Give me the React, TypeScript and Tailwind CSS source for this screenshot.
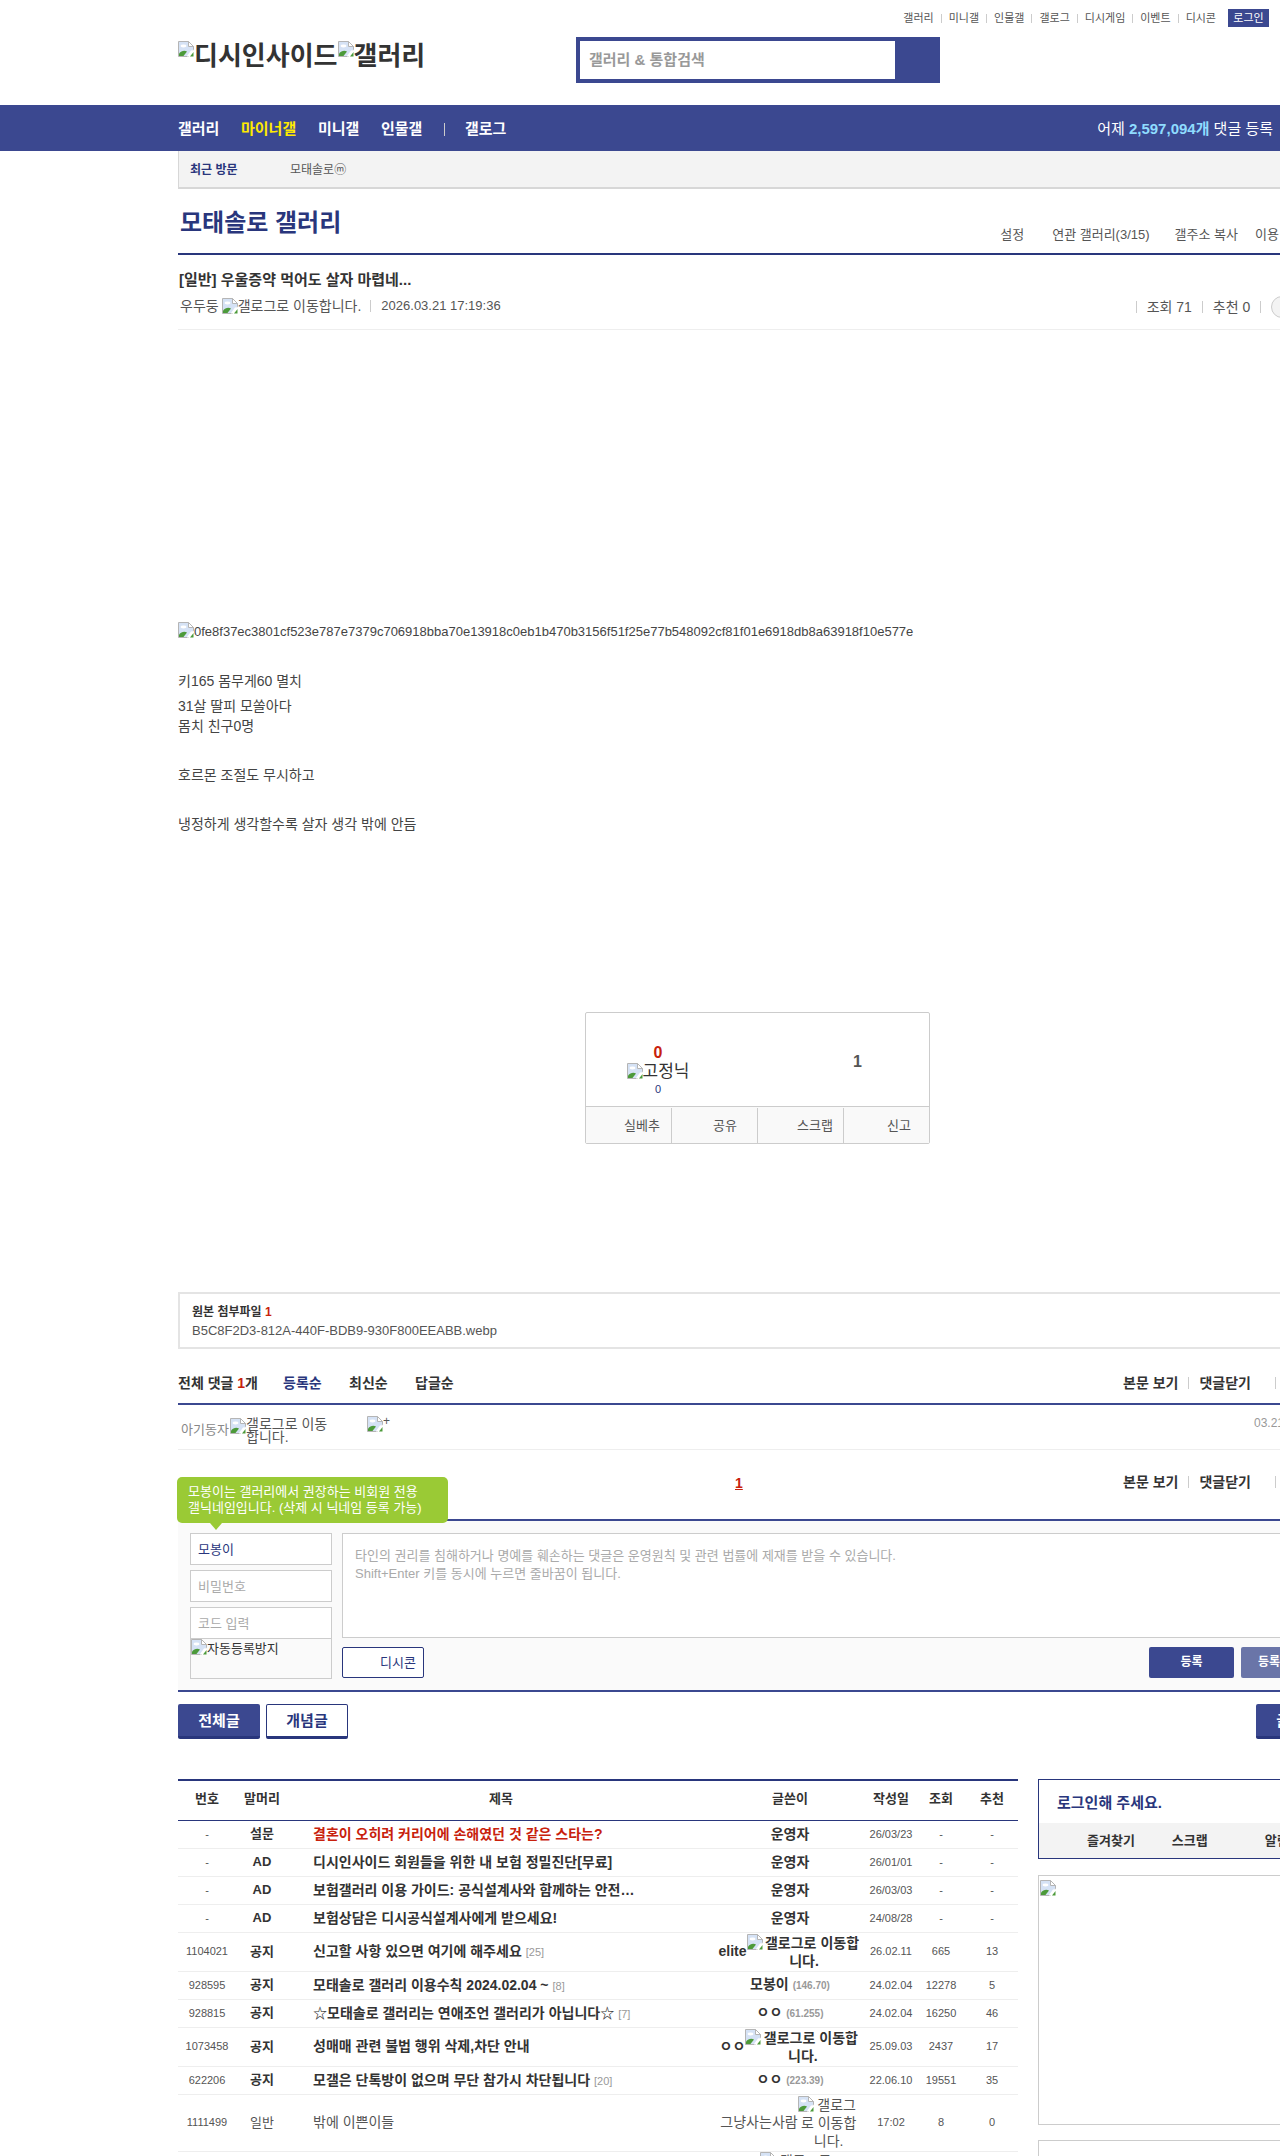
import { FC, ReactNode } from "react";

const BrokenImg: FC<{ className?: string }> = ({ className }) => (
  <svg width="16" height="16" viewBox="0 0 16 16" className={`inline-block shrink-0 align-[-2px] ${className || ""}`}>
    <path d="M0.5 0.5H10.5L15.5 5.5V8.5L10.5 15.5H0.5Z" fill="#d5e2f5" stroke="#b5b5b5" />
    <path d="M10.5 0.5V5.5H15.5Z" fill="#fff" stroke="#b5b5b5" />
    <ellipse cx="5.5" cy="5" rx="3" ry="1.4" fill="#fff" />
    <path d="M1 15V12.5C3.5 9.5 6.5 9 9 10.5L5.5 15Z" fill="#4c9a3a" />
    <path d="M9 15L13 9.5L15.5 9V15.5H9Z" fill="#fff" />
    <path d="M12 15.5L15.5 11V15.5Z" fill="#4c9a3a" />
  </svg>
);

// a broken img with alt text: the icon floats, the alt wraps beside it
const Alt: FC<{ text: string; className?: string }> = ({ text, className }) => (
  <span className={`inline-block align-middle text-center ${className || ""}`}>
    <BrokenImg className="float-left" />
    {text}
  </span>
);

const Sep = ({ className = "h-[11px]" }: { className?: string }) => (
  <span className={`inline-block w-px bg-[#ccc] ${className}`} />
);

const topLinks = ["갤러리", "미니갤", "인물갤", "갤로그", "디시게임", "이벤트", "디시콘"];

type Row = {
  no: string;
  head: string;
  title: string;
  count?: string;
  writer: ReactNode;
  date: string;
  views: string;
  rec: string;
  h: string;
  red?: boolean;
  plain?: boolean;
};

const Gallog = ({ nick }: { nick: string }) => (
  <>
    {nick}
    <Alt text="갤로그로 이동합니다." className="w-[115px] leading-[18px]" />
  </>
);

const Rate = ({ nick, n }: { nick: string; n: string }) => (
  <>
    {nick} <span className="text-[10px] text-[#999]">({n})</span>
  </>
);

const rows: Row[] = [
  { no: "-", head: "설문", title: "결혼이 오히려 커리어에 손해였던 것 같은 스타는?", writer: "운영자", date: "26/03/23", views: "-", rec: "-", h: "h-[28px]", red: true },
  { no: "-", head: "AD", title: "디시인사이드 회원들을 위한 내 보험 정밀진단[무료]", writer: "운영자", date: "26/01/01", views: "-", rec: "-", h: "h-[28px]" },
  { no: "-", head: "AD", title: "보험갤러리 이용 가이드: 공식설계사와 함께하는 안전…", writer: "운영자", date: "26/03/03", views: "-", rec: "-", h: "h-[28px]" },
  { no: "-", head: "AD", title: "보험상담은 디시공식설계사에게 받으세요!", writer: "운영자", date: "24/08/28", views: "-", rec: "-", h: "h-[28px]" },
  { no: "1104021", head: "공지", title: "신고할 사항 있으면 여기에 해주세요", count: "[25]", writer: <Gallog nick="elite" />, date: "26.02.11", views: "665", rec: "13", h: "h-[39px]" },
  { no: "928595", head: "공지", title: "모태솔로 갤러리 이용수칙 2024.02.04 ~", count: "[8]", writer: <Rate nick="모봉이" n="146.70" />, date: "24.02.04", views: "12278", rec: "5", h: "h-[28px]" },
  { no: "928815", head: "공지", title: "☆모태솔로 갤러리는 연애조언 갤러리가 아닙니다☆", count: "[7]", writer: <Rate nick="ㅇㅇ" n="61.255" />, date: "24.02.04", views: "16250", rec: "46", h: "h-[28px]" },
  { no: "1073458", head: "공지", title: "성매매 관련 불법 행위 삭제,차단 안내", writer: <Gallog nick="ㅇㅇ" />, date: "25.09.03", views: "2437", rec: "17", h: "h-[39px]" },
  { no: "622206", head: "공지", title: "모갤은 단톡방이 없으며 무단 참가시 차단됩니다", count: "[20]", writer: <Rate nick="ㅇㅇ" n="223.39" />, date: "22.06.10", views: "19551", rec: "35", h: "h-[28px]" },
  { no: "1111499", head: "일반", title: "밖에 이쁜이들", writer: <>그냥사는사람<Alt text=" 갤로그로 이동합니다." className="w-[62px] leading-[18px]" /></>, date: "17:02", views: "8", rec: "0", h: "h-[57px]", plain: true },
];

const ViewLinks = () => (
  <div className="flex items-center text-[14px] leading-[18px] font-bold text-[#333]">
    <span>본문 보기</span>
    <Sep className="mx-[10px] h-[12px]" />
    <span>댓글닫기</span>
    <Sep className="ml-[24px] h-[12px]" />
    <span className="ml-[8px] w-[54px] whitespace-nowrap">새로고침</span>
  </div>
);

export default function App() {
  return (
    <div className="w-[1280px] h-[2156px] overflow-hidden bg-white text-[#333] [font-family:'Liberation_Sans','Noto_Sans_CJK_KR',sans-serif]">
      <header className="w-[1160px] ml-[178px] h-[105px]">
        <div className="flex justify-end items-center pt-[9px] pr-[69px] h-[27px] text-[11px] text-[#555]">
          {topLinks.map((l, i) => (
            <span key={l} className="flex items-center">
              {i > 0 && <Sep className="mx-[7px] h-[9px]" />}
              {l}
            </span>
          ))}
          <span className="ml-[12px] w-[41px] h-[18px] leading-[18px] text-center bg-[#3b4890] text-white">로그인</span>
        </div>
        <div className="flex items-start mt-[10px]">
          <div className="w-[398px] flex items-center text-[26px] leading-[30px] font-bold text-[#333] pt-[4px]">
            <BrokenImg className="self-start" />
            디시인사이드
            <BrokenImg className="self-start" />
            갤러리
          </div>
          <div className="w-[364px] h-[46px] bg-[#3b4890] p-[4px] pr-[45px]">
            <div className="h-full bg-white pl-[9px] text-[15px] font-bold leading-[38px] text-[#999]">갤러리 &amp; 통합검색</div>
          </div>
        </div>
      </header>

      <nav className="h-[46px] bg-[#3b4890]">
        <div className="w-[1160px] ml-[178px] h-full flex items-center pt-[2px] text-[15px] font-bold text-white">
          <span className="w-[63px]">갤러리</span>
          <span className="w-[77px] text-[#ffea00]">마이너갤</span>
          <span className="w-[63px]">미니갤</span>
          <span className="w-[63px]">인물갤</span>
          <Sep className="h-[13px] bg-[#6a75a8]" />
          <span className="ml-[20px]">갤로그</span>
          <span className="ml-auto mr-[65px] font-normal">
            어제 <b className="text-[#8fdcff]">2,597,094개</b> 댓글 등록
          </span>
        </div>
      </nav>

      <main className="w-[1160px] ml-[178px]">
        <div className="h-[38px] flex items-center pt-[1px] bg-[#f3f3f3] border-l border-b-2 border-[#d7d7d7] text-[12px]">
          <b className="w-[100px] ml-[11px] text-[#29367c]">최근 방문</b>
          <span className="text-[#555]">모태솔로ⓜ</span>
        </div>

        <div className="h-[66px] flex justify-between items-end border-b-2 border-[#29367c]">
          <h1 className="ml-[2px] mb-[14px] text-[24px] leading-[32px] font-bold text-[#29367c]">모태솔로 갤러리</h1>
          <div className="mb-[9px] flex items-center text-[13px] text-[#555]">
            <span>설정</span>
            <Sep className="ml-[18px] mr-[9px]" />
            <span>연관 갤러리(3/15)</span>
            <Sep className="ml-[15px] mr-[9px]" />
            <span>갤주소 복사</span>
            <Sep className="mx-[8px]" />
            <span className="w-[83px] whitespace-nowrap">이용 안내</span>
          </div>
        </div>

        <div className="h-[75px] border-b border-[#eee]">
          <h2 className="ml-px pt-[15px] text-[15px] leading-[20px] font-bold">[일반] 우울증약 먹어도 살자 마렵네...</h2>
          <div className="flex items-center mt-[4px] ml-[2px] text-[14px] text-[#555] leading-[18px]">
            <span>우두둥</span>
            <BrokenImg className="ml-[3px]" />
            <span>갤로그로 이동합니다.</span>
            <Sep className="ml-[9px] mr-[10px] h-[12px]" />
            <span className="text-[13px]">2026.03.21 17:19:36</span>
            <div className="ml-[635px] mt-[2px] flex items-center">
              <Sep className="mr-[10px] h-[12px]" />
              <span>조회 71</span>
              <Sep className="mx-[10px] h-[12px]" />
              <span>추천 0</span>
              <Sep className="mx-[10px] h-[12px]" />
              <span className="w-[30px] h-[22px] rounded-full border border-[#ccc] bg-[#f3f3f3]" />
            </div>
          </div>
        </div>

        <article className="text-[14px] leading-[20px] text-[#444]">
          <div className="pt-[292px] text-[13px]">
            <BrokenImg />
            0fe8f37ec3801cf523e787e7379c706918bba70e13918c0eb1b470b3156f51f25e77b548092cf81f01e6918db8a63918f10e577e
          </div>
          <p className="mt-[29px]">키165 몸무게60 멸치</p>
          <p className="mt-[5px]">31살 딸피 모쏠아다</p>
          <p>몸치 친구0명</p>
          <p className="mt-[29px]">호르몬 조절도 무시하고</p>
          <p className="mt-[29px]">냉정하게 생각할수록 살자 생각 밖에 안듬</p>
        </article>

        <section className="ml-[407px] mt-[178px] w-[345px] h-[132px] border border-[#ccc] rounded-[2px] flex flex-col">
          <div className="h-[94px] flex border-b border-[#ccc]">
            <div className="w-[144px] pt-[30px] text-center">
              <div className="text-[16px] leading-[20px] font-bold text-[#c8210c]">0</div>
              <div className="whitespace-nowrap text-[17px] leading-[18px] text-[#333]">
                <BrokenImg />
                고정닉
              </div>
              <div className="text-[11px] leading-[16px] text-[#29367c]">0</div>
            </div>
            <div className="ml-[123px] pt-[39px] text-[16px] leading-[20px] font-bold text-[#555]">1</div>
          </div>
          <div className="flex-1 flex pt-[1px] bg-[#f9f9f9] text-[13px] text-[#555]">
            <div className="w-[86px] pr-[11px] flex items-center justify-end border-r border-[#ccc]">실베추</div>
            <div className="w-[86px] pr-[20px] flex items-center justify-end border-r border-[#ccc]">공유</div>
            <div className="w-[86px] pr-[10px] flex items-center justify-end border-r border-[#ccc]">스크랩</div>
            <div className="flex-1 pr-[18px] flex items-center justify-end">신고</div>
          </div>
        </section>

        <section className="mt-[148px] h-[57px] border-2 border-[#e4e4e4] pl-[12px] pt-[9px]">
          <div className="text-[12px] leading-[18px] font-bold">
            원본 첨부파일 <span className="text-[#c8210c]">1</span>
          </div>
          <div className="text-[13px] leading-[20px] text-[#555]">B5C8F2D3-812A-440F-BDB9-930F800EEABB.webp</div>
        </section>

        <div className="h-[56px] flex items-start justify-between pt-[25px] border-b-2 border-[#3b4890]">
          <div className="flex text-[14px] leading-[18px] font-bold">
            <span className="w-[105px]">
              전체 댓글 <span className="text-[#c8210c]">1</span>개
            </span>
            <span className="w-[66px] text-[#29367c]">등록순</span>
            <span className="w-[66px]">최신순</span>
            <span>답글순</span>
          </div>
          <ViewLinks />
        </div>

        <div className="h-[45px] border-b border-[#eee] relative text-[13px] text-[#888]">
          <div className="flex pt-[11px] pl-[3px]">
            <span className="pt-[6px] w-[49px] leading-[16px]">아기동자</span>
            <span className="w-[98px] text-[14px] text-[#555] leading-[13px] pt-[2px]">
              <BrokenImg className="float-left" />
              갤로그로 이동합니다.
            </span>
            <span className="ml-[39px] flex items-start text-[12px] leading-[10px] text-[#555]">
              <BrokenImg />+
            </span>
          </div>
          <span className="absolute left-[1076px] top-[9px] text-[12px] text-[#999]">03.21</span>
        </div>

        <div className="relative h-[71px] border-b-2 border-[#3b4890]">
          <div className="absolute left-[-1px] top-[27px] w-[271px] h-[46px] rounded-[5px] bg-[#9aca35] pl-[11px] pt-[7px] text-[13px] leading-[16px] text-white z-10">
            모봉이는 갤러리에서 권장하는 비회원 전용<br />
            갤닉네임입니다. (삭제 시 닉네임 등록 가능)
            <span className="absolute left-[33px] top-[46px] border-x-[6px] border-t-[7px] border-x-transparent border-t-[#9aca35]" />
          </div>
          <span className="absolute left-[557px] top-[24px] text-[14px] leading-[18px] font-bold text-[#c8210c] underline">1</span>
          <div className="absolute right-0 top-[23px]">
            <ViewLinks />
          </div>
        </div>

        <section className="h-[171px] bg-[#fafafa] flex border-b-2 border-[#3b4890] pt-[12px] pr-[12px]">
          <div className="w-[142px] ml-[12px] flex flex-col text-[13px]">
            <div className="h-[32px] border border-[#ccc] bg-white pl-[7px] leading-[32px] text-[#29367c]">모봉이</div>
            <div className="h-[32px] mt-[5px] border border-[#ccc] bg-white pl-[7px] leading-[32px] text-[#aaa]">비밀번호</div>
            <div className="h-[31px] mt-[5px] border border-[#ccc] border-b-0 bg-white pl-[7px] leading-[32px] text-[#aaa]">코드 입력</div>
            <div className="h-[41px] border border-[#ccc] leading-[18px] text-[#333]">
              <BrokenImg />
              자동등록방지
            </div>
          </div>
          <div className="ml-[10px] flex-1 flex flex-col">
            <div className="h-[105px] border border-[#ccc] bg-white pl-[12px] pt-[13px] text-[13px] leading-[18px] text-[#aaa]">
              타인의 권리를 침해하거나 명예를 훼손하는 댓글은 운영원칙 및 관련 법률에 제재를 받을 수 있습니다.<br />
              Shift+Enter 키를 동시에 누르면 줄바꿈이 됩니다.
            </div>
            <div className="mt-[9px] h-[31px] flex text-[13px]">
              <span className="w-[82px] border border-[#29367c] rounded-[2px] bg-white pl-[37px] leading-[29px] text-[#29367c]">디시콘</span>
              <span className="ml-auto w-[85px] rounded-[2px] bg-[#3b4890] text-center text-[12px] font-bold leading-[31px] text-white">등록</span>
              <span className="ml-[7px] w-[85px] rounded-[2px] bg-[#6a75a8] text-center text-[12px] font-bold leading-[31px] text-white">등록+추천</span>
            </div>
          </div>
        </section>

        <div className="mt-[12px] flex text-[15px] font-bold">
          <span className="w-[82px] h-[35px] leading-[33px] text-center rounded-[2px] bg-[#3b4890] border-b-[3px] border-[#29367c] text-white">전체글</span>
          <span className="ml-[6px] w-[82px] h-[35px] leading-[32px] text-center rounded-[2px] border border-b-[3px] border-[#29367c] text-[#29367c]">개념글</span>
          <span className="ml-auto w-[82px] h-[35px] leading-[33px] text-center rounded-[2px] bg-[#3b4890] border-b-[3px] border-[#29367c] text-white">글쓰기</span>
        </div>

        <div className="mt-[40px] flex items-start gap-[20px]">
          <table className="w-[840px] table-fixed border-collapse border-t-2 border-[#29367c]">
            <colgroup>
              <col className="w-[58px]" />
              <col className="w-[52px]" />
              <col className="w-[426px]" />
              <col className="w-[152px]" />
              <col className="w-[50px]" />
              <col className="w-[50px]" />
              <col className="w-[52px]" />
            </colgroup>
            <thead>
              <tr className="h-[40px] border-b border-[#29367c] text-[13px] font-bold text-[#333] text-center">
                <th className="pb-[3px]">번호</th>
                <th className="pb-[3px]">말머리</th>
                <th className="pb-[3px]">제목</th>
                <th className="pb-[3px]">글쓴이</th>
                <th className="pb-[3px]">작성일</th>
                <th className="pb-[3px]">조회</th>
                <th className="pb-[3px]">추천</th>
              </tr>
            </thead>
            <tbody>
              {rows.map((r) => (
                <tr key={r.no + r.title} className={`${r.h} border-b border-[#eee] text-center text-[11px] text-[#555]`}>
                  <td>{r.no}</td>
                  <td className={`text-[13px] ${r.plain ? "" : "font-bold text-[#333]"}`}>{r.head}</td>
                  <td className={`pl-[25px] text-left text-[14px] whitespace-nowrap ${r.plain ? "text-[#555]" : "font-bold"} ${r.red ? "text-[#c8210c]" : "text-[#333]"}`}>
                    {r.title}
                    {r.count && <span className="ml-[4px] text-[11px] font-normal text-[#999]">{r.count}</span>}
                  </td>
                  <td className={`text-[14px] leading-[18px] ${r.plain ? "font-normal text-[#555]" : "font-bold text-[#333]"}`}>{r.writer}</td>
                  <td>{r.date}</td>
                  <td>{r.views}</td>
                  <td>{r.rec}</td>
                </tr>
              ))}
              <tr className="text-center text-[14px] text-[#555]">
                <td colSpan={3} />
                <td className="align-top pl-[46px] text-left leading-[18px] whitespace-nowrap">
                  <BrokenImg /> 갤로그로
                </td>
                <td colSpan={3} />
              </tr>
            </tbody>
          </table>

          <aside className="w-[300px] shrink-0">
            <div className="h-[80px] border border-[#29367c]">
              <div className="h-[43px] pl-[18px] pt-[13px] text-[15px] leading-[20px] font-bold text-[#29367c]">로그인해 주세요.</div>
              <div className="h-[35px] pt-[1px] bg-[#f3f3f3] flex items-center pl-[48px] text-[13px] font-bold">
                <span>즐겨찾기</span>
                <Sep className="mx-[18px] bg-[#ddd]" />
                <span>스크랩</span>
                <Sep className="mx-[18px] bg-[#ddd]" />
                <span className="ml-[20px]">알림</span>
              </div>
            </div>
            <div className="mt-[16px] h-[250px] border border-[#ccc] p-px">
              <BrokenImg />
            </div>
            <div className="mt-[15px] h-[60px] border border-[#ccc]" />
          </aside>
        </div>
      </main>
    </div>
  );
}
